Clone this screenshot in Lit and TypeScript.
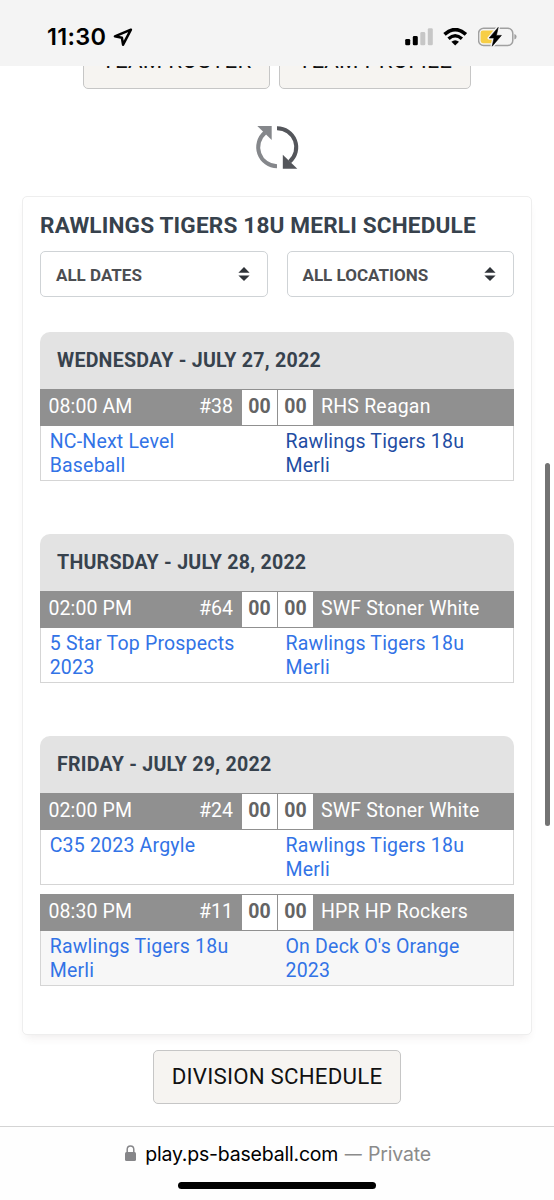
import { LitElement, html, css } from "lit";
import { customElement, property } from "lit/decorators.js";

interface Game {
  time: string;
  id: string;
  venue: string;
  away: string[];
  home: string[];
  visited?: boolean;
  shaded?: boolean;
}

const MERLI = ["Rawlings Tigers 18u", "Merli"];

const days: { label: string; games: Game[] }[] = [
  {
    label: "WEDNESDAY - JULY 27, 2022",
    games: [
      { time: "08:00 AM", id: "#38", venue: "RHS Reagan", away: ["NC-Next Level", "Baseball"], home: MERLI, visited: true },
    ],
  },
  {
    label: "THURSDAY - JULY 28, 2022",
    games: [
      { time: "02:00 PM", id: "#64", venue: "SWF Stoner White", away: ["5 Star Top Prospects", "2023"], home: MERLI },
    ],
  },
  {
    label: "FRIDAY - JULY 29, 2022",
    games: [
      { time: "02:00 PM", id: "#24", venue: "SWF Stoner White", away: ["C35 2023 Argyle"], home: MERLI },
      { time: "08:30 PM", id: "#11", venue: "HPR HP Rockers", away: MERLI, home: ["On Deck O's Orange", "2023"], shaded: true },
    ],
  },
];

@customElement("status-bar")
class StatusBar extends LitElement {
  static styles = css`
    :host {
      display: flex;
      align-items: flex-start;
      box-sizing: border-box;
      height: 66px;
      padding: 23px 36px 0 47px;
      background: #f4f4f4;
      font-family: Inter, sans-serif;
    }
    .time { font-size: 23.5px; line-height: 28px; font-weight: 600; letter-spacing: 0.3px; color: #000; width: 66px; white-space: nowrap; }
    .arrow { margin-top: 4px; }
    .signal { margin: 5px 0 0 auto; }
    .wifi { margin: 5px 0 0 10px; }
    .battery { margin: 3px 0 0 10px; }
    svg { display: block; flex: none; }
  `;
  render() {
    return html`
      <div class="time">11:30</div>
      <svg class="arrow" width="20" height="20" viewBox="0 0 20 20">
        <path d="M17.9 2.7 L1.9 9.3 L8.9 10.8 L10.1 17.7 Z" fill="none" stroke="#000" stroke-width="2.5" stroke-linejoin="round"/>
      </svg>
      <svg class="signal" width="28" height="18" viewBox="0 0 28 18">
        <rect x="0.2" y="10.9" width="5" height="6.4" rx="1.4"/>
        <rect x="7.8" y="8" width="5" height="9.3" rx="1.4"/>
        <rect x="15.3" y="4" width="5" height="13.3" rx="1.4" fill="#c6c6c6"/>
        <rect x="22.8" y="0.2" width="5" height="17.1" rx="1.4" fill="#c6c6c6"/>
      </svg>
      <svg class="wifi" width="25" height="18" viewBox="0 0 25 18">
        <path d="M1.5 6.4 Q12.2 -3.2 22.9 6.4" fill="none" stroke="#000" stroke-width="3.6"/>
        <path d="M5.5 10.7 Q12.2 4.7 18.9 10.7" fill="none" stroke="#000" stroke-width="3.4"/>
        <path d="M8.4 13.7 Q12.2 10.6 16 13.7 L12.2 17.5 Z"/>
      </svg>
      <svg class="battery" width="40" height="22" viewBox="0 0 40 22">
        <rect x="0.6" y="2.2" width="34.2" height="17.2" rx="5" fill="none" stroke="#a0a0a0" stroke-width="1.5"/>
        <path d="M36.4 8 Q38.6 8.6 38.6 10.8 Q38.6 13 36.4 13.6 Z" fill="#a0a0a0"/>
        <path d="M5 4.4 H17.6 V17.2 H5 Q2.6 17.2 2.6 14.8 V6.8 Q2.6 4.4 5 4.4 Z" fill="#f7ce46"/>
        <path d="M20.2 1.4 L11.2 12 H16 L14.2 20.2 L23.4 9.4 H18.4 Z" stroke="#f4f4f4" stroke-width="3.4" stroke-linejoin="round"/>
        <path d="M20.2 1.4 L11.2 12 H16 L14.2 20.2 L23.4 9.4 H18.4 Z" stroke="#000" stroke-width="0.6" stroke-linejoin="round"/>
      </svg>
    `;
  }
}

@customElement("filter-select")
class FilterSelect extends LitElement {
  @property() label = "";
  static styles = css`
    :host {
      display: flex;
      align-items: center;
      justify-content: space-between;
      box-sizing: border-box;
      height: 46px;
      padding: 2px 17px 0 15px;
      border: 1.5px solid #cfd3d6;
      border-radius: 5px;
      background: #fff;
      font: 700 17px/22px Roboto, sans-serif;
      color: #4c4e52;
    }
    svg { display: block; margin-top: -3px; }
  `;
  render() {
    return html`<span>${this.label}</span>
      <svg width="12" height="14" viewBox="0 0 12 14" fill="#2f3338">
        <path d="M0.4 5.8 L6 0 L11.6 5.8 Z" />
        <path d="M0.4 8.4 L6 14 L11.6 8.4 Z" />
      </svg>`;
  }
}

@customElement("game-row")
class GameRow extends LitElement {
  @property({ attribute: false }) game!: Game;
  static styles = css`
    :host { display: block; font: 400 19.5px/24px Roboto, sans-serif; white-space: nowrap; }
    .bar {
      display: grid;
      grid-template-columns: 1fr auto 35px 36px 201px;
      box-sizing: border-box;
      height: 37px;
      padding: 1px 0 1px 8.5px;
      background: #909090;
      color: #fff;
      line-height: 33px;
    }
    .time { letter-spacing: 0.1px; }
    .id { padding-right: 9px; }
    .score { background: #fff; color: #646464; font-weight: 700; text-align: center; box-sizing: border-box; }
    .score + .score { margin-left: 1px; }
    .venue { padding-left: 8px; letter-spacing: 0.2px; }
    .teams {
      display: grid;
      grid-template-columns: 1fr 227.5px;
      box-sizing: border-box;
      height: 55px;
      padding: 4px 0 0 8.7px;
      border: 1.5px solid #d5d5d5;
      border-top: 0;
      background: #fff;
      color: #3273e6;
      letter-spacing: 0.2px;
    }
    .shaded { background: #f7f7f7; }
    .visited { color: #1f4da3; }
  `;
  render() {
    const g = this.game;
    const lines = (t: string[]) => t.map((l) => html`<div>${l}</div>`);
    return html`
      <div class="bar">
        <span class="time">${g.time}</span><span class="id">${g.id}</span>
        <span class="score">00</span><span class="score">00</span>
        <span class="venue">${g.venue}</span>
      </div>
      <div class="teams ${g.shaded ? "shaded" : ""}">
        <div>${lines(g.away)}</div>
        <div class=${g.visited ? "visited" : ""}>${lines(g.home)}</div>
      </div>
    `;
  }
}

@customElement("app-root")
class AppRoot extends LitElement {
  static styles = css`
    :host {
      display: flex;
      flex-direction: column;
      position: relative;
      width: 554px;
      height: 1200px;
      overflow: hidden;
      background: #fff;
      font-family: Roboto, sans-serif;
    }
    .top-buttons {
      display: flex;
      align-items: flex-end;
      gap: 9px;
      height: 23px;
      overflow: hidden;
      padding-left: 83px;
      flex: none;
    }
    .button {
      box-sizing: border-box;
      height: 54px;
      border: 1.5px solid #c6c6c6;
      border-radius: 5px;
      background: #f6f4f1;
      color: #111;
      font-size: 22.3px;
      letter-spacing: 0.2px;
      line-height: 51px;
      text-align: center;
      white-space: nowrap;
    }
    .roster, .profile { line-height: 49px; }
    .roster { width: 187px; }
    .profile { width: 192px; }
    .sync { display: block; margin: 36px 0 0 254px; flex: none; }
    .card {
      box-sizing: border-box;
      width: 510px;
      height: 839px;
      flex: none;
      margin: 25px 0 0 22px;
      padding: 16px 17px 0;
      border: 1.5px solid #eee;
      border-radius: 5px;
      box-shadow: 0 6px 10px -4px rgba(90, 60, 60, 0.1);
      background: #fff;
    }
    .title { font-size: 22.6px; line-height: 26px; font-weight: 700; letter-spacing: 0.16px; color: #37424d; white-space: nowrap; }
    .filters { display: grid; grid-template-columns: 1fr 1fr; gap: 19px; margin-top: 12px; }
    .days { display: flex; flex-direction: column; gap: 53px; margin-top: 35px; }
    .day-head {
      height: 57px;
      box-sizing: border-box;
      padding: 4px 17px 0;
      border-radius: 10px 10px 0 0;
      background: #e3e3e3;
      font-size: 19.6px;
      line-height: 50px;
      font-weight: 700;
      letter-spacing: 0.24px;
      color: #37424d;
      white-space: nowrap;
    }
    .games { display: flex; flex-direction: column; gap: 9px; }
    .division { width: 248px; margin: 15px 0 0 153px; flex: none; }
    .address {
      display: flex;
      flex-direction: column;
      align-items: center;
      box-sizing: border-box;
      margin-top: auto;
      height: 74px;
      border-top: 1px solid #d4d4d4;
      background: #fefefe;
      font: 400 19.5px/26px Inter, sans-serif;
      letter-spacing: -0.2px;
    }
    .url { display: flex; margin: 14px 0 0 2px; white-space: nowrap; color: #000; }
    .lock { display: block; margin: 4px 9px 0 0; }
    .dash { color: #8b8b8b; font-size: 17px; margin: 0 6.5px; }
    .private { color: #8b8b8b; }
    .home { width: 198px; height: 7px; border-radius: 4px; background: #000; margin-top: 15px; }
    .thumb {
      position: absolute;
      left: 545px;
      top: 463px;
      width: 5px;
      height: 363px;
      border-radius: 3px;
      background: #737373;
    }
  `;
  render() {
    return html`
      <status-bar></status-bar>
      <div class="top-buttons">
        <div class="button roster">TEAM ROSTER</div>
        <div class="button profile">TEAM PROFILE</div>
      </div>
      <svg class="sync" width="46" height="46" viewBox="0 0 46 46">
        <path d="M23 41.3 A19.1 19.1 0 0 1 11 7.6" fill="none" stroke="#85878b" stroke-width="4" />
        <path d="M3.3 1 H17.7 V15 Z" fill="#85878b" />
        <path d="M23 3.2 A19.1 19.1 0 0 1 35.6 36.8" fill="none" stroke="#54565b" stroke-width="4" />
        <path d="M28.8 29.8 V43.8 H43.3 Z" fill="#54565b" />
      </svg>
      <div class="card">
        <div class="title">RAWLINGS TIGERS 18U MERLI SCHEDULE</div>
        <div class="filters">
          <filter-select label="ALL DATES"></filter-select>
          <filter-select label="ALL LOCATIONS"></filter-select>
        </div>
        <div class="days">
          ${days.map(
            (d) => html`<div>
              <div class="day-head">${d.label}</div>
              <div class="games">${d.games.map((g) => html`<game-row .game=${g}></game-row>`)}</div>
            </div>`
          )}
        </div>
      </div>
      <div class="button division">DIVISION SCHEDULE</div>
      <div class="address">
        <div class="url">
          <svg class="lock" width="11" height="17" viewBox="0 0 11 17">
            <rect x="0" y="7" width="11" height="9" rx="1.5" fill="#868689" />
            <path d="M2.2 8 V4.6 Q2.2 1 5.5 1 Q8.8 1 8.8 4.6 V8" fill="none" stroke="#868689" stroke-width="1.5" />
          </svg>
          <span>play.ps-baseball.com</span><span class="dash">—</span><span class="private">Private</span>
        </div>
        <div class="home"></div>
      </div>
      <div class="thumb"></div>
    `;
  }
}
